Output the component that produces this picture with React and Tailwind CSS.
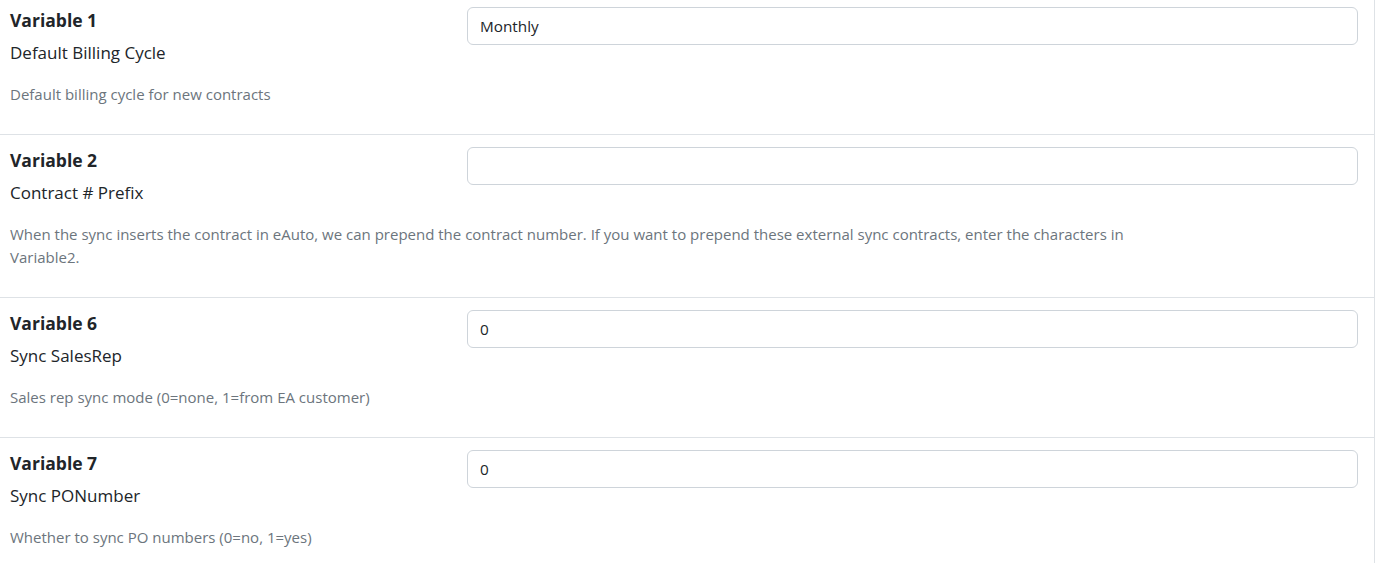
import React from "react";

const settings = [
  {
    name: "Variable 1",
    label: "Default Billing Cycle",
    value: "Monthly",
    help: "Default billing cycle for new contracts",
  },
  {
    name: "Variable 2",
    label: "Contract # Prefix",
    value: "",
    help: "When the sync inserts the contract in eAuto, we can prepend the contract number. If you want to prepend these external sync contracts, enter the characters in Variable2.",
  },
  {
    name: "Variable 6",
    label: "Sync SalesRep",
    value: "0",
    help: "Sales rep sync mode (0=none, 1=from EA customer)",
  },
  {
    name: "Variable 7",
    label: "Sync PONumber",
    value: "0",
    help: "Whether to sync PO numbers (0=no, 1=yes)",
  },
];

const SettingRow = ({ name, label, value, help }) => {
  return (
    <div className="w-[1375px] border-b border-r border-[#dee2e6] pl-[10px] pr-[16px] pt-[12px] pb-[28px]">
      <div className="flex gap-[10px]">
        {/* Left - name and label */}
        <div className="w-[447px] shrink-0">
          <div className="text-[17.5px] leading-[27px] font-bold text-[#212529]">{name}</div>
          <div className="mt-[6px] text-[17px] leading-[25px] text-[#212529]">{label}</div>
        </div>
        {/* Right - value input */}
        <input
          type="text"
          defaultValue={value}
          className="flex-1 h-[38px] rounded-[6px] border border-[#ced4da] bg-white px-[12px] text-[15.3px] text-[#212529] outline-none"
        />
      </div>
      <p className="mt-[18px] max-w-[1125px] text-[15px] leading-[23px] text-[#6c757d]">{help}</p>
    </div>
  );
};

export default function App() {
  return (
    <div className="min-h-screen bg-white overflow-hidden" style={{ fontFamily: "'Open Sans', 'Noto Sans', sans-serif" }}>
      <div className="-mt-[5px]">
        {settings.map((s) => (
          <SettingRow key={s.name} {...s} />
        ))}
      </div>
    </div>
  );
}
